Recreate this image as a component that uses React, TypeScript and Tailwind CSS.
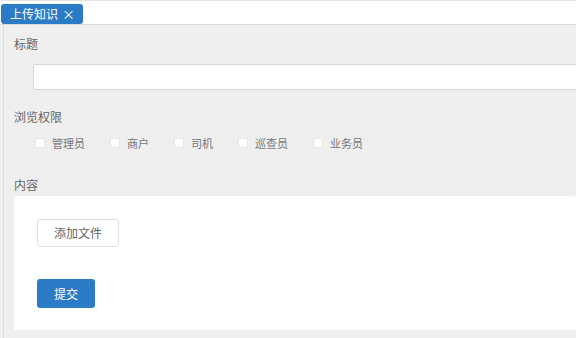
import React from "react";

export default function App() {
  const roles = ["管理员", "商户", "司机", "巡查员", "业务员"];
  return (
    <div className="w-[576px] h-[338px] overflow-hidden bg-[#efefef] font-['Noto_Sans_CJK_SC','Noto_Sans',sans-serif]">
      <div className="h-[25px] bg-white border-t border-[#e4e4e4] border-b border-b-[#d9d9d9] pt-[3px] pl-[1px] flex">
        <div className="h-[20px] pl-[9px] pr-[8px] bg-[#2b7bc7] rounded-[3px] text-white text-[12px] leading-[20px] flex items-center gap-[4px]">
          <span>上传知识</span>
          <span className="text-[13px]">×</span>
        </div>
      </div>
      <div className="ml-[3px] border-l border-[#dcdcdc] h-[313px] pl-[10px] pt-[11px]">
        <div className="text-[12px] leading-[16px] text-[#666]">标题</div>
        <div className="mt-[12px] ml-[19px] -mr-[20px] h-[26px] bg-white border border-[#d6d6d6] rounded-[2px]" />
        <div className="mt-[19px] text-[12px] leading-[16px] text-[#666]">浏览权限</div>
        <div className="mt-[10px] ml-[21px] flex gap-[25px] h-[16px] items-center">
          {roles.map((r) => (
            <div key={r} className="flex items-center gap-[7px]">
              <div className="w-[10px] h-[10px] bg-white border border-[#e8e8e8] rounded-[2px]" />
              <span className="text-[11px] leading-[16px] text-[#777]">{r}</span>
            </div>
          ))}
        </div>
        <div className="mt-[26px] text-[12px] leading-[16px] text-[#666]">内容</div>
        <div className="mt-[3px] h-[134px] bg-white rounded-[3px] pl-[23px] pt-[23px]">
          <div className="w-[82px] h-[28px] border border-[#dedede] rounded-[3px] flex items-center justify-center text-[12px] text-[#666] bg-white">
            添加文件
          </div>
          <div className="mt-[32px] w-[58px] h-[29px] bg-[#2b7bc7] rounded-[3px] flex items-center justify-center text-[12px] text-white">
            提交
          </div>
        </div>
      </div>
    </div>
  );
}
